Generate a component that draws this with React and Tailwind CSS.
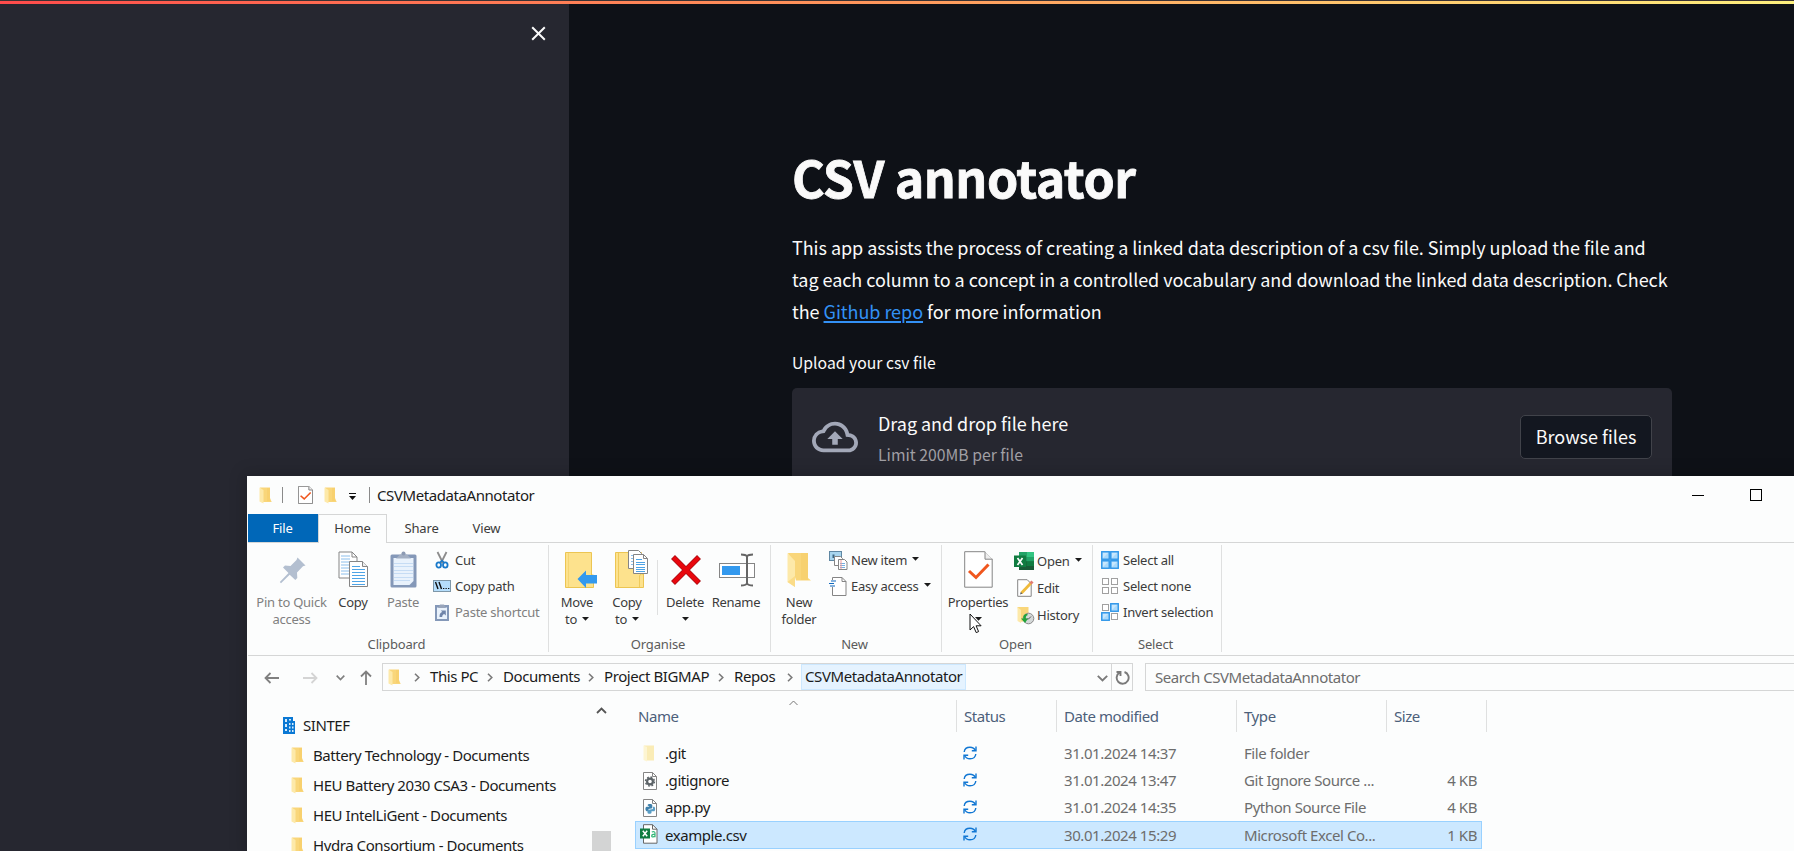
import React from "react";

const ui = "font-['Noto_Sans','Open_Sans',sans-serif]";

function Svg({ w, h, children, className = "" }) {
  return (
    <svg width={w} height={h} viewBox={`0 0 ${w} ${h}`} className={`shrink-0 ${className}`} fill="none">
      {children}
    </svg>
  );
}

function Folder({ className = "" }) {
  return (
    <Svg w={13} h={17} className={className}>
      <path d="M1 0.5h10v10.500l1.700 4H4z" fill="#f9d67a" />
      <path d="M0.5 0.5L4.5 3v13.5L0.5 14.5z" fill="#fde9a9" />
      <path d="M8 1h3v13H8z" fill="#f6cd68" opacity=".6" />
    </Svg>
  );
}

function Caret({ className = "" }) {
  return (
    <Svg w={7} h={4} className={className}>
      <path d="M0 0h7L3.5 3.8z" fill="#1b1b1b" />
    </Svg>
  );
}

function Chevron() {
  return (
    <Svg w={6} h={9}>
      <path d="M1 0.7l3.8 3.8L1 8.3" stroke="#7a7a7a" strokeWidth="1.6" />
    </Svg>
  );
}

function Page({ w = 14, h = 18, children }) {
  return (
    <Svg w={w} h={h}>
      <path d={`M.5 .5h${w - 5}l4 4v${h - 5}h-${w - 1}z`} fill="#fff" stroke="#858585" />
      <path d={`M${w - 4.5} .5v4h4`} stroke="#858585" />
      {children}
    </Svg>
  );
}

const PinIcon = () => (
  <Svg w={28} h={28}>
    <path d="M18.500 1.500l8 8-2.500.8-6 6.200.3 5.500-2 2-5.600-5.300L2 27.200.8 26 9.500 17 4 11.500l2-2 5.500.4 6-6z" fill="#b3bfd0" />
  </Svg>
);
const CopyIcon = () => (
  <Svg w={31} h={37}>
    <path d="M1 1h13l5 5v21H1z" fill="#fff" stroke="#858585" />
    <path d="M3 5h9M3 8h9M3 11h9M3 14h8M3 17h8M3 20h8M3 23h8" stroke="#8cbfec" />
    <path d="M14 1v5h5" stroke="#858585" />
    <path d="M11.500 10.500h13l5 5v20h-18z" fill="#fff" stroke="#858585" />
    <path d="M24.500 10.500v5h5" stroke="#858585" fill="#eee" />
    <path d="M14 15.500h8M14 18.500h13M14 21.500h13M14 24.500h13M14 27.500h13M14 30.500h13M14 33.500h13" stroke="#4ea4e6" />
  </Svg>
);
const PasteIcon = () => (
  <Svg w={27} h={37}>
    <rect x="0.500" y="3.500" width="26" height="33" rx="1.500" fill="#8498b8" />
    <path d="M3.500 7h20v23l-4 4h-16z" fill="#e9f2fc" />
    <path d="M4 12.500h19M4 15.500h19M4 19.500h19M4 22.500h19M4 26.500h19M4 29.500h16" stroke="#c6dcf4" />
    <path d="M6 7.500l4-4h1.500a2 2 0 014 0H17l4 4z" fill="#a3afc3" />
    <circle cx="13.500" cy="2.600" r="2" fill="#8d9bb4" />
  </Svg>
);
const CutIcon = () => (
  <Svg w={14} h={18}>
    <path d="M2.500 1l5.500 11M11.500 1L6 12" stroke="#8c8c8c" strokeWidth="1.800" />
    <ellipse cx="3.700" cy="14" rx="2.300" ry="2.700" stroke="#1979ca" strokeWidth="1.800" />
    <ellipse cx="10.300" cy="14" rx="2.300" ry="2.700" stroke="#1979ca" strokeWidth="1.800" />
    <path d="M5 11.500l2-2 2 2" stroke="#1979ca" strokeWidth="1.500" />
  </Svg>
);
const CopyPathIcon = () => (
  <Svg w={18} h={12}>
    <rect x=".5" y=".5" width="17" height="11" fill="#b5defc" stroke="#7e97a8" />
    <path d="M2.500 2l2.500 7M6 2l2.500 7" stroke="#111" strokeWidth="1.400" />
    <path d="M10 8.500h1.300M12.500 8.500h1.300M15 8.500h1.300" stroke="#111" />
  </Svg>
);
const PasteShortcutIcon = () => (
  <Svg w={14} h={18}>
    <rect x="0" y="2" width="14" height="16" fill="#8498b8" />
    <path d="M2 4.500h10v11.500H2z" fill="#e9f2fc" />
    <path d="M3 5L5 1.500h4L11 5z" fill="#98a5bb" />
    <path d="M4.500 14c0-3.500 1-4.500 2.800-5L5.800 7.500h5V12.500L9.200 11c-1.500.5-2 1.500-2 3z" fill="#7085aa" />
  </Svg>
);
const MoveIcon = () => (
  <Svg w={33} h={38}>
    <path d="M.5 1.500h26v22.500h2v12.500h-28z" fill="#fde28d" stroke="#ecc552" />
    <path d="M3.500 2v34" stroke="#f5d572" />
    <path d="M12.500 28L21 19.500v4.500h11v8.500H21V37z" fill="#3399ee" />
  </Svg>
);
const CopyToIcon = () => (
  <Svg w={34} h={39}>
    <path d="M.5 2.500h26v21.500h2v13.500h-28z" fill="#fde28d" stroke="#ecc552" />
    <path d="M3.500 3v34M24.500 37V26l1.500-2.500" stroke="#efca5c" />
    <path d="M13.500.5h10l3 3v15h-13z" fill="#fff" stroke="#858585" />
    <path d="M16 5.500h6M16 8.500h6M16 11.500h6M16 14.500h6" stroke="#8cbfec" />
    <path d="M18.500 4.500h10l4 4v15h-14z" fill="#fff" stroke="#858585" />
    <path d="M28.500 4.500v4h4" stroke="#858585" />
    <path d="M21 9.500h6M21 12.500h9M21 14.500h9M21 17.500h9M21 19.500h9M21 21.500h9" stroke="#4ea4e6" />
  </Svg>
);
const DeleteIcon = () => (
  <Svg w={32} h={32}>
    <path d="M3 3l26 26M29 3L3 29" stroke="#a80f14" strokeWidth="5.600" />
    <path d="M3.500 3.500l25 25M28.500 3.500l-25 25" stroke="#e8070d" strokeWidth="4" />
  </Svg>
);
const RenameIcon = () => (
  <Svg w={37} h={34}>
    <rect x=".5" y="10.500" width="35" height="14" fill="#fff" stroke="#858585" />
    <rect x="3" y="13" width="18" height="9" fill="#3399ee" />
    <path d="M28 3v28M22 1.500c3 0 5 .5 6 2 1-1.500 3-2 6-2M22 32.500c3 0 5-.5 6-2 1 1.500 3 2 6 2" stroke="#666" strokeWidth="2" />
  </Svg>
);
const NewFolderIcon = () => (
  <Svg w={25} h={36}>
    <path d="M1 1h20v25l3 2.500H9z" fill="#f9d67a" />
    <path d="M14 1h7v27h-7z" fill="#f5cc66" opacity=".5" />
    <path d="M.5 1l7.500 8v26L.5 30z" fill="#fde9a9" />
    <path d="M.5 30l7.500-6v11z" fill="#fbdc88" />
  </Svg>
);
const NewItemIcon = () => (
  <Svg w={19} h={19}>
    <rect x=".5" y=".5" width="12" height="9" fill="#a8d5ee" stroke="#5f87a3" />
    <path d="M3.500 7V3.500h2V7" fill="#3b6582" />
    <path d="M5.500 5.500h6l2 2v7h-8z" fill="#fff" stroke="#858585" />
    <path d="M9.500 8.500h6l2.500 2.500v7.500H9.500z" fill="#fff" stroke="#858585" />
    <path d="M11 12.500h5M11 14.500h5M11 16.500h5" stroke="#78afe0" />
    <path d="M12 9v9" stroke="#e99" />
  </Svg>
);
const EasyIcon = () => (
  <Svg w={18} h={19}>
    <path d="M3.500.5h9.500l4 4v14H3.500z" fill="#fff" stroke="#858585" />
    <path d="M13 .5v4h4" stroke="#858585" />
    <path d="M1 3h5v7H1z" fill="#fcfdfd" />
    <path d="M2 4h5M0 6.500h5M1 9h5" stroke="#1269bd" strokeWidth="1.200" />
  </Svg>
);
const PropertiesIcon = ({ w = 29, h = 37 }) => (
  <svg width={w} height={h} viewBox="0 0 29 37" fill="none" preserveAspectRatio="none" className="shrink-0">
    <path d="M.7 .7h20l7.500 7.500v28H.7z" fill="#fff" stroke="#858585" vectorEffect="non-scaling-stroke" />
    <path d="M21 .7v7.500h7.500" fill="#eee" stroke="#858585" vectorEffect="non-scaling-stroke" />
    <path d="M5 20l7 6.500L24.500 13.500" stroke="#f0561d" strokeWidth="3" />
  </svg>
);
const ExcelIcon = () => (
  <Svg w={20} h={18}>
    <path d="M5 0h15v18H5z" fill="#185c37" />
    <path d="M5 0h7.500v9H5z" fill="#21a366" />
    <path d="M12.500 0H20v5h-7.500z" fill="#33c481" />
    <path d="M12.500 5H20v4.500h-7.500z" fill="#21a366" />
    <path d="M12.500 9.500H20V14h-7.500z" fill="#107c41" />
    <rect y="3.500" width="12" height="11.500" fill="#107c41" />
    <path d="M3.500 6l5 7M8.500 6l-5 7" stroke="#fff" strokeWidth="1.700" />
  </Svg>
);
const EditIcon = () => (
  <Svg w={18} h={18}>
    <path d="M.7.7h9.500l4 4v12.600H.7z" fill="#fff" stroke="#858585" />
    <path d="M4.500 14L14 4" stroke="#f0bb3c" strokeWidth="2.800" />
    <path d="M3 15.500l.8-2.500 1.700 1.600z" fill="#555" />
    <path d="M13.500 4.500L15.500 2.500" stroke="#e07a70" strokeWidth="3" />
  </Svg>
);
const HistoryIcon = () => (
  <Svg w={18} h={19}>
    <path d="M.5 1h11v12l-7 3z" fill="#f9d67a" />
    <path d="M.5 1L4 4v13L.5 15z" fill="#fde9a9" />
    <circle cx="11.500" cy="12.500" r="5.300" fill="#d4d8d8" stroke="#898989" />
    <path d="M11.500 13l2.500-2.500M11.500 13h-2" stroke="#555" />
    <path d="M10 8c-3 0-4 2-3.500 4.500H4L8 17l3-4.500H9C8.500 11 9 9.500 11 9z" fill="#21a33a" />
  </Svg>
);
function Cell({ x, y, on }) {
  return on ? (
    <>
      <rect x={x + 0.75} y={y + 0.75} width="7.500" height="7.500" fill="#a9d9fb" stroke="#2f95e8" strokeWidth="1.400" />
      <path d={`M${x + 2} ${y + 7}v-5h5z`} fill="#c8e7fd" />
    </>
  ) : (
    <rect x={x + 1.5} y={y + 1.5} width="6" height="6" fill="#fff" stroke="#a0a0a0" />
  );
}
function SelectIcon({ a, b }) {
  return (
    <Svg w={18} h={18}>
      <Cell x={0} y={0} on={a} />
      <Cell x={9} y={0} on={b} />
      <Cell x={0} y={9} on={b} />
      <Cell x={9} y={9} on={a} />
    </Svg>
  );
}
const SyncIcon = () => (
  <Svg w={14} h={14}>
    <path d="M1.200 6C1.500 3 4 1.200 7 1.200c2.500 0 4.500 1.300 5.500 3.300M12.800 8c-.3 3-2.800 4.800-5.800 4.800-2.500 0-4.500-1.300-5.500-3.300" stroke="#1177d3" strokeWidth="1.400" />
    <path d="M13 .5v4.300H8.800M1 13.500V9.200h4.200" stroke="#1177d3" strokeWidth="1.400" />
  </Svg>
);

const rib = "text-[13px] leading-[17px] tracking-[-0.25px] whitespace-nowrap";

function Big({ icon, l1, l2, caret, dim, className }) {
  return (
    <div className={`flex shrink-0 flex-col items-center ${rib} ${dim ? "text-[#808080]" : "text-[#3b3b3b]"} ${className}`}>
      <div className="flex h-[49px] items-center justify-center">{icon}</div>
      <div>{l1}</div>
      <div className="flex h-[17px] items-center gap-[5px]">
        {l2 && <span>{l2}</span>}
        {caret && <Caret className="-mt-[2px]" />}
      </div>
    </div>
  );
}

function Small({ icon, label, caret, dim, iw = "w-[22px]" }) {
  return (
    <div className={`flex h-[26px] items-center ${rib} ${dim ? "text-[#808080]" : "text-[#3b3b3b]"}`}>
      <div className={`flex shrink-0 ${iw}`}>{icon}</div>
      <span>{label}</span>
      {caret && <Caret className="ml-[5px] -mt-[3px]" />}
    </div>
  );
}

function Group({ label, children, className }) {
  return (
    <div className={`my-[2px] flex h-[107px] shrink-0 flex-col border-r border-[#dfe0e0] ${className}`}>
      <div className="flex h-[91px] shrink-0">{children}</div>
      <div className="pr-[3px] text-center text-[13px] leading-[17px] tracking-[-0.15px] text-[#5b5b5b]">{label}</div>
    </div>
  );
}

const crumbs = [
  ["This PC", "ml-[10px] w-[47px]"],
  ["Documents", "ml-[10px] w-[75px]"],
  ["Project BIGMAP", "ml-[10px] w-[104px]"],
  ["Repos", "ml-[10px] w-[41px]"],
];

const tree = [
  "Battery Technology - Documents",
  "HEU Battery 2030 CSA3 - Documents",
  "HEU IntelLiGent - Documents",
  "Hydra Consortium - Documents",
];

const GitFolder = () => (
  <Svg w={13} h={17}>
    <path d="M1 .5h10v15H3z" fill="#faecb6" />
    <path d="M.5.5L4 2v14.500L.5 15z" fill="#fdf5d2" />
  </Svg>
);
const GearFile = () => (
  <Page>
    <circle cx="7" cy="9.500" r="2.900" stroke="#5d6468" strokeWidth="2.200" />
    <circle cx="7" cy="9.500" r="4.500" stroke="#5d6468" strokeWidth="1.400" strokeDasharray="1.800 1.734" />
  </Page>
);
const PyFile = () => (
  <Page>
    <path d="M4.500 6.200c0-1.600 4.800-1.600 4.800 0v3L5.500 10v2.300H3.500c-1.500-1-1.500-4 0-4.600h3z" fill="#3f80ab" />
    <path d="M10 7.700h1.300c1.300 1 1 4 0 4.500H8.500v1.600c0 1.300-4 1.300-4 0V11l5.500-1z" fill="#5a9dc4" />
  </Page>
);
const CsvFile = () => (
  <Svg w={18} h={20}>
    <path d="M3.500.7h9l4.500 4.500v14H3.500z" fill="#fff" stroke="#666" />
    <path d="M12.500.7v4.500H17" stroke="#666" />
    <rect y="4.500" width="10" height="10" fill="#107c41" />
    <path d="M2.800 6.800l4.400 5.500M7.200 6.800l-4.400 5.500" stroke="#fff" strokeWidth="1.500" />
    <path d="M11.800 8c2-.8 3.200-.3 3.200 1.200v4M15 10.200c-2 0-3.300.5-3.300 1.700 0 1.500 2.300 1.300 3.300 0" stroke="#33b879" strokeWidth="1.200" />
  </Svg>
);

const files = [
  [<GitFolder />, ".git", "31.01.2024 14:37", "File folder", ""],
  [<GearFile />, ".gitignore", "31.01.2024 13:47", "Git Ignore Source ...", "4 KB"],
  [<PyFile />, "app.py", "31.01.2024 14:35", "Python Source File", "4 KB"],
  [<CsvFile />, "example.csv", "30.01.2024 15:29", "Microsoft Excel Co...", "1 KB"],
];

function Explorer() {
  return (
    <div className={`absolute left-[247px] top-[476px] flex h-[375px] w-[1547px] flex-col overflow-hidden bg-[#fcfdfd] pl-px shadow-[0_0_14px_4px_rgba(0,0,0,0.15)] ${ui}`}>
      <div className="flex h-[38px] shrink-0 items-center pl-[11px]">
        <Folder />
        <div className="ml-[10px] h-4 w-px bg-[#8a8a8a]" />
        <div className="ml-[15px]"><PropertiesIcon w={15} h={18} /></div>
        <Folder className="ml-[11px]" />
        <Svg w={7} h={8} className="ml-[12px] mt-[3px]">
          <path d="M0 .5h7" stroke="#111" />
          <path d="M0 3h7L3.500 7z" fill="#111" />
        </Svg>
        <div className="ml-[13px] h-4 w-px bg-[#8a8a8a]" />
        <span className="ml-[7px] text-[15px] tracking-[-0.42px] text-[#1b1b1b]">CSVMetadataAnnotator</span>
        <div className="ml-auto mr-[32px] flex items-center gap-[46px]">
          <div className="h-px w-3 bg-black" />
          <div className="size-3 border border-black" />
        </div>
      </div>

      <div className="flex h-[29px] shrink-0 border-b border-[#d5d6d6] text-[13px] leading-[28px] tracking-[-0.15px] text-[#3b3b3b]">
        <div className="h-7 w-[70px] bg-[#0067b8] pr-px text-center text-white">File</div>
        <div className="h-[29px] w-[69px] border-x border-t border-[#d5d6d6] bg-[#fcfdfd] text-center leading-[26px]">Home</div>
        <div className="w-[69px] text-center">Share</div>
        <div className="w-[61px] text-center">View</div>
      </div>

      <div className="flex h-[113px] shrink-0 border-b border-[#d5d6d6]">
        <Group label="Clipboard" className="w-[301px]">
          <Big icon={<span className="pl-[2px] pt-px"><PinIcon /></span>} l1="Pin to Quick" l2="access" dim className="ml-[6px] w-[75px]" />
          <Big icon={<CopyIcon />} l1="Copy" className="w-[48px]" />
          <Big icon={<PasteIcon />} l1="Paste" dim className="w-[52px]" />
          <div className="ml-[4px] mt-[2px]">
            <Small icon={<span className="pl-[2px]"><CutIcon /></span>} label="Cut" />
            <Small icon={<CopyPathIcon />} label="Copy path" />
            <Small icon={<span className="pl-[2px]"><PasteShortcutIcon /></span>} label="Paste shortcut" dim />
          </div>
        </Group>
        <Group label="Organise" className="w-[222px]">
          <Big icon={<span className="pl-[8px]"><MoveIcon /></span>} l1="Move" l2="to" caret className="ml-[3px] w-[50px]" />
          <Big icon={<span className="pl-[10px]"><CopyToIcon /></span>} l1="Copy" l2="to" caret className="w-[50px]" />
          <div className="ml-[5px] mt-[15px] h-[55px] w-px bg-[#dfe0e0]" />
          <Big icon={<span className="pl-[2px]"><DeleteIcon /></span>} l1="Delete" caret className="ml-[1px] w-[52px]" />
          <Big icon={<span className="pl-[2px]"><RenameIcon /></span>} l1="Rename" className="w-[50px]" />
        </Group>
        <Group label="New" className="w-[171px]">
          <Big icon={<NewFolderIcon />} l1="New" l2="folder" className="ml-[6px] w-[44px]" />
          <div className="ml-[8px] mt-[2px]">
            <Small icon={<NewItemIcon />} label="New item" caret />
            <Small icon={<EasyIcon />} label="Easy access" caret />
          </div>
        </Group>
        <Group label="Open" className="w-[151px]">
          <Big icon={<PropertiesIcon />} l1="Properties" caret className="ml-[3px] w-[66px]" />
          <div className="ml-[3px] mt-[3px] flex flex-col gap-px">
            <Small icon={<ExcelIcon />} iw="w-[23px]" label="Open" caret />
            <Small icon={<span className="pl-[3px]"><EditIcon /></span>} iw="w-[23px]" label="Edit" />
            <Small icon={<span className="pl-[3px]"><HistoryIcon /></span>} iw="w-[23px]" label="History" />
          </div>
        </Group>
        <Group label="Select" className="w-[129px]">
          <div className="ml-[8px] mt-[2px]">
            <Small icon={<SelectIcon a b />} label="Select all" />
            <Small icon={<SelectIcon />} label="Select none" />
            <Small icon={<SelectIcon b />} label="Invert selection" />
          </div>
        </Group>
      </div>

      <div className="flex h-[42px] shrink-0 items-center text-[15px] tracking-[-0.42px] text-[#1b1b1b]">
        <Svg w={15} h={12} className="ml-[16px] mt-px"><path d="M15 6H1.500M6.500 1l-5 5 5 5" stroke="#808080" strokeWidth="1.800" /></Svg>
        <Svg w={15} h={12} className="ml-[24px] mt-px"><path d="M0 6h13.500M8.500 1l5 5-5 5" stroke="#d4d4d4" strokeWidth="1.800" /></Svg>
        <Svg w={9} h={6} className="ml-[18px] mt-px"><path d="M.7.7l3.800 3.800L8.300.7" stroke="#808080" strokeWidth="1.700" /></Svg>
        <Svg w={12} h={15} className="ml-[15px] mt-px"><path d="M6 15V1.500M1 6.500l5-5 5 5" stroke="#808080" strokeWidth="1.800" /></Svg>
        <div className="ml-[10px] flex h-7 w-[751px] items-center border border-[#d5d6d6]">
          <Folder className="ml-[5px]" />
          {crumbs.map(([t, w], i) => (
            <React.Fragment key={t}>
              <div className={i === 0 ? "ml-[13px]" : "ml-[10px]"}><Chevron /></div>
              <span className={`mb-[2px] whitespace-nowrap ${w}`}>{t}</span>
            </React.Fragment>
          ))}
          <div className="ml-[12px]"><Chevron /></div>
          <span className="ml-[8px] flex h-[26px] w-[165px] items-center border border-[#cce8ff] bg-[#e5f3ff] pb-[2px] pl-[3px]">CSVMetadataAnnotator</span>
          <Svg w={11} h={7} className="ml-auto mr-[3px] mt-[2px]"><path d="M.8.8l4.700 4.700L10.200.8" stroke="#7a7a7a" strokeWidth="1.900" /></Svg>
          <div className="flex h-[26px] w-[21px] items-center justify-center border-l border-[#d5d6d6]">
            <Svg w={15} h={15}><path d="M9.500 2a6 6 0 11-5 .6M1.500 2h4v4" stroke="#7a7a7a" strokeWidth="1.900" /></Svg>
          </div>
        </div>
        <div className="ml-[12px] flex h-7 flex-1 items-center border-y border-l border-[#d5d6d6] pl-[9px] tracking-[-0.45px] text-[#6d6d6d]">Search CSVMetadataAnnotator</div>
      </div>

      <div className="flex h-[153px] min-h-0 text-[15px] tracking-[-0.43px] text-[#1b1b1b]">
        <div className="flex w-[344px] shrink-0 flex-col pt-[12px]">
          <div className="flex h-[30px] shrink-0 items-center pl-[35px]">
            <Svg w={12} h={17}>
              <path d="M0 0h10v4h2v13H0z" fill="#0a78d4" />
              <path d="M2 2h2v3H2zM6 2h2v1.500H6zM2 7h2v3H2zM2 12h2v2H2zM6 6h1.500v2H6zM9 6h1.500v2H9zM6 9.500h1.500v2H6zM9 9.500h1.500v2H9zM6 13h1.500v2H6zM9 13h1.500v2H9z" fill="#d6ebfb" />
            </Svg>
            <span className="ml-[8px]">SINTEF</span>
          </div>
          {tree.map((t) => (
            <div key={t} className="flex h-[30px] shrink-0 items-center pl-[43px]">
              <Folder />
              <span className="ml-[9px] whitespace-nowrap">{t}</span>
            </div>
          ))}
        </div>
        <div className="flex w-[19px] shrink-0 flex-col items-center">
          <Svg w={11} h={7} className="mt-[9px]"><path d="M1 6l4.500-4.500L10 6" stroke="#555" strokeWidth="1.800" /></Svg>
          <div className="mt-auto h-[20px] w-[19px] bg-[#d3d4d4]" />
        </div>
        <div className="ml-[24px] flex w-[853px] flex-col">
          <div className="grid h-[42px] shrink-0 grid-cols-[322px_100px_180px_150px_100px] pt-[2px] text-[#4c607a]">
            {["Name", "Status", "Date modified", "Type", "Size"].map((t, i) => (
              <div key={t} className={`relative flex h-8 items-center border-r border-[#dfe0e0] leading-[34px] ${i === 0 ? "pl-[3px]" : "pl-[7px]"}`}>
                {t}
                {i === 0 && (
                  <svg className="absolute left-[154px] top-0" width="9" height="6" fill="none"><path d="M.5 5l4-4 4 4" stroke="#777" /></svg>
                )}
              </div>
            ))}
          </div>
          {files.map(([icon, n, d, ty, s], i) => (
            <div
              key={n}
              className={`grid shrink-0 grid-cols-[322px_100px_180px_150px_90px] items-center text-[#6d6d6d] ${i === 3 ? "h-[28px] w-[847px] bg-[#cce8ff] outline -outline-offset-1 outline-[#99d1ff]" : "h-[27px]"}`}
            >
              <div className="flex items-center text-[#1b1b1b]">
                <div className={`flex w-[22px] ${i === 3 ? "pb-[2px] pl-[5px]" : "pl-[8px]"}`}>{icon}</div>
                <span className="ml-[8px]">{n}</span>
              </div>
              <div className="mb-[2px] pl-[6px]"><SyncIcon /></div>
              <div className="pl-[7px] whitespace-nowrap">{d}</div>
              <div className="pl-[7px] whitespace-nowrap">{ty}</div>
              <div className="text-right">{s}</div>
            </div>
          ))}
        </div>
      </div>
    </div>
  );
}

export default function App() {
  return (
    <div className="relative flex h-[851px] w-[1794px] flex-col overflow-hidden bg-[#0e1117] font-['Noto_Sans_CJK_SC',sans-serif] text-[#fafafa]">
      <div className="h-1 shrink-0 border-t border-[#3b3334] bg-linear-to-r from-[#ff4b4b] via-[#ff985c] to-[#fdf07e]" />
      <div className="flex flex-1">
        <div className="flex w-[569px] shrink-0 items-start justify-end bg-[#262730] pr-[23px] pt-[22px]">
          <Svg w={15} h={15}><path d="M1.200 1.200l12.600 12.600M13.800 1.200L1.200 13.800" stroke="#fafafa" strokeWidth="2" /></Svg>
        </div>
        <div className="ml-[223px] flex w-[880px] flex-col">
          <h1 className="mt-[138px] h-[68px] whitespace-nowrap text-[50px] font-bold leading-[68px] tracking-[-0.5px] [-webkit-text-stroke:0.8px_#fafafa]">CSV annotator</h1>
          <p className="mt-[21px] whitespace-nowrap text-[18px] leading-[32px] tracking-[-0.045px]">
            This app assists the process of creating a linked data description of a csv file. Simply upload the file and<br />
            tag each column to a concept in a controlled vocabulary and download the linked data description. Check<br />
            the <a className="text-[#3391f5] underline decoration-2 underline-offset-2">Github repo</a> for more information
          </p>
          <div className="mt-[23px] text-[15.750px] leading-[26px]">Upload your csv file</div>
          <div className="mt-[12px] flex h-[100px] items-start rounded-[5px] bg-[#262730] px-[20px]">
            <svg width="46" height="46" viewBox="0 0 24 24" className="mt-[26px]" fill="#a3a8b8">
              <path d="M19.350 10.040A7.490 7.490 0 0012 4C9.110 4 6.600 5.640 5.350 8.040A5.994 5.994 0 000 14c0 3.310 2.690 6 6 6h13c2.760 0 5-2.240 5-5 0-2.640-2.050-4.780-4.650-4.960zM19 18H6c-2.210 0-4-1.790-4-4 0-2.050 1.530-3.760 3.560-3.970l1.070-.11.5-.95A5.469 5.469 0 0112 6c2.620 0 4.880 1.860 5.390 4.430l.3 1.500 1.530.11A2.980 2.980 0 0122 15c0 1.650-1.350 3-3 3zM8 13h2.550v3h2.900v-3H16l-4-4z" />
            </svg>
            <div className="ml-[20px] mt-[19px]">
              <div className="text-[18px] leading-[32px] tracking-[-0.045px]">Drag and drop file here</div>
              <div className="mt-[1px] text-[15.750px] leading-[29px] text-[#a09fa4]">Limit 200MB per file</div>
            </div>
            <div className="ml-auto mt-[27px] flex h-[44px] w-[132px] items-center justify-center rounded-[5px] border border-[#41434a] bg-[#131720] pb-[2px] text-[18px]">Browse files</div>
          </div>
        </div>
      </div>
      <Explorer />
      <svg className="absolute left-[969px] top-[613px]" width="14" height="21" fill="none">
        <path d="M1 1v16l3.600-3.400 2.600 6 2.400-1-2.500-5.800h5z" fill="#fff" stroke="#111" />
      </svg>
    </div>
  );
}
